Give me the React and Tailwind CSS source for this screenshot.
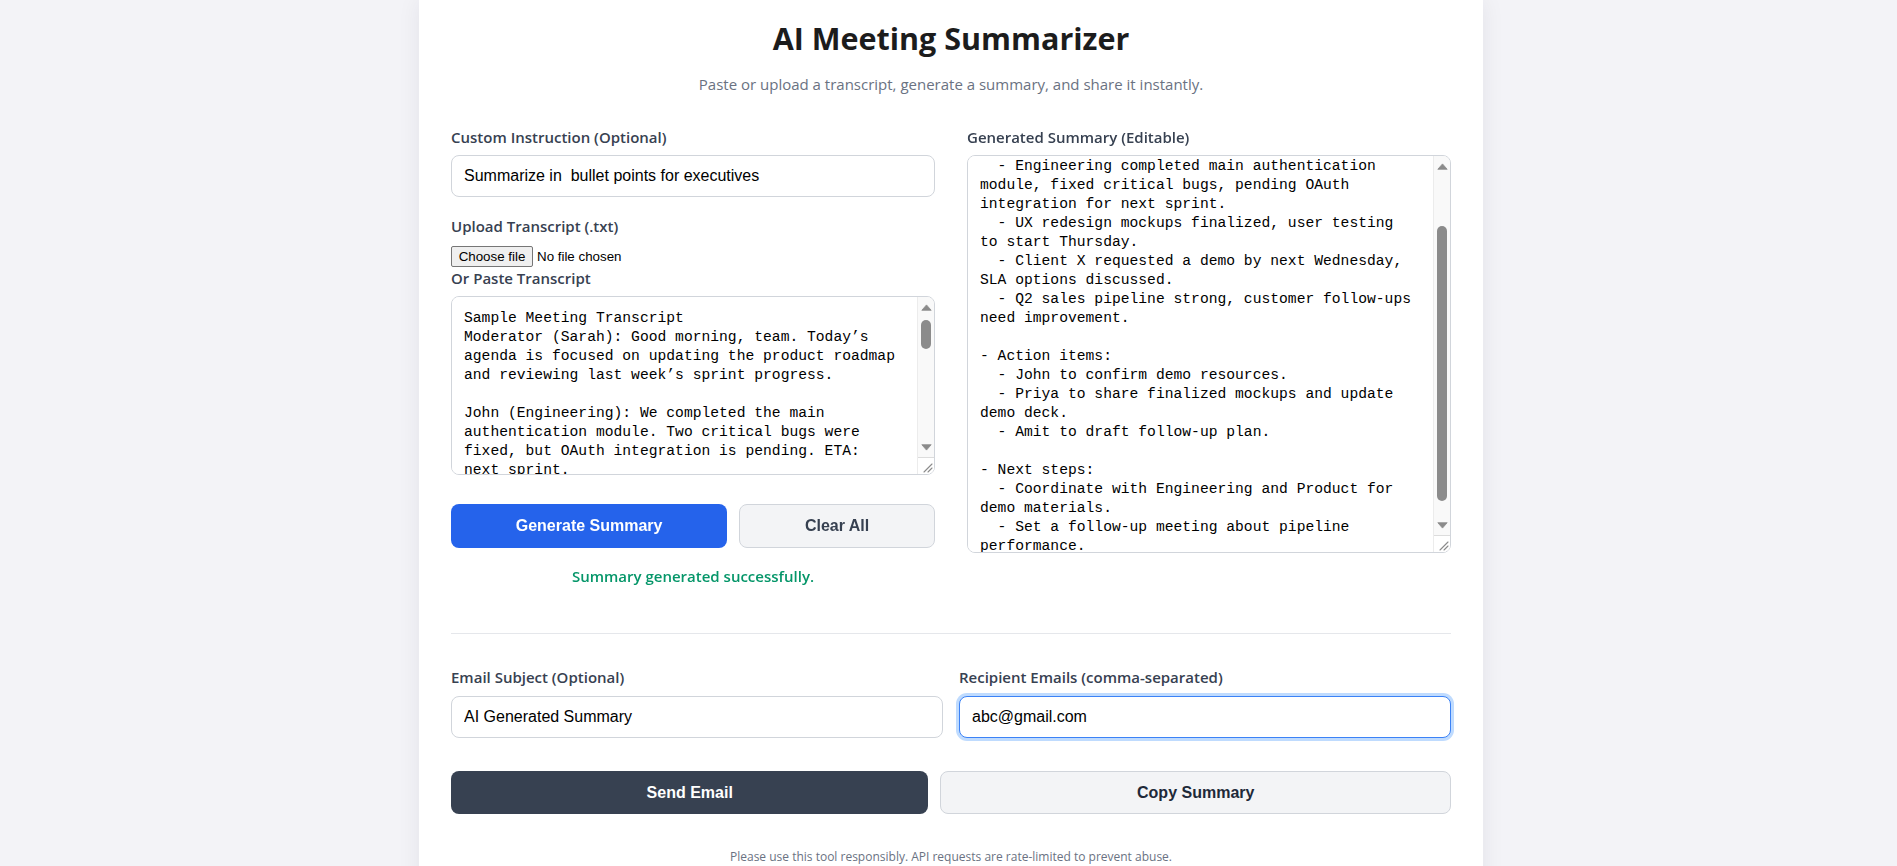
import { useEffect, useRef, useState } from "react";

const transcript = `Sample Meeting Transcript
Moderator (Sarah): Good morning, team. Today’s agenda is focused on updating the product roadmap and reviewing last week’s sprint progress.

John (Engineering): We completed the main authentication module. Two critical bugs were fixed, but OAuth integration is pending. ETA: next sprint.

Priya (Design): The UX redesign mockups are finalized. We plan to start user testing on Thursday with five participants.

Michael (Client Success): Client X has requested a demo of the new dashboard by next Wednesday. They also asked about SLA options.

Amit (Sales): Our Q2 pipeline looks strong, but customer follow-ups need improvement. I’ll draft a follow-up plan.

Moderator (Sarah): Great. John, please confirm demo resources. Priya, share the finalized mockups and update the demo deck. Let’s coordinate with Engineering and Product for demo materials and set a follow-up meeting about pipeline performance.

Meeting adjourned.`;

const initialSummary = `Executive Summary:

- Key updates:
  - Engineering completed main authentication module, fixed critical bugs, pending OAuth integration for next sprint.
  - UX redesign mockups finalized, user testing to start Thursday.
  - Client X requested a demo by next Wednesday, SLA options discussed.
  - Q2 sales pipeline strong, customer follow-ups need improvement.

- Action items:
  - John to confirm demo resources.
  - Priya to share finalized mockups and update demo deck.
  - Amit to draft follow-up plan.

- Next steps:
  - Coordinate with Engineering and Product for demo materials.
  - Set a follow-up meeting about pipeline performance.`;

const label = "block text-[15px] leading-5 font-semibold text-[#374151]";
const field =
  "h-[42px] w-full rounded-lg border bg-white px-3 font-['Liberation_Sans',Arial,sans-serif] text-base text-black outline-none";
const mono =
  "h-full min-w-0 flex-1 resize-none bg-white pt-3 pb-3 pl-3 pr-[17px] font-['Liberation_Mono',monospace] text-[14.66px] leading-[19px] text-black outline-none [scrollbar-width:none]";

function Arrow({ down }) {
  return (
    <svg width="11" height="7" viewBox="0 0 11 7" className={down ? "rotate-180" : ""}>
      <path
        d="M5.5 0.9 L10.2 6.3 H0.8 Z"
        fill="#8b8b8b"
        stroke="#8b8b8b"
        strokeWidth="0.8"
        strokeLinejoin="round"
      />
    </svg>
  );
}

// drawn scrollbar column: arrows, track with thumb, resize grip
function ScrollColumn({ trackClass, thumbClass }) {
  return (
    <div className="flex w-[17px] shrink-0 flex-col border-l border-[#ececec] bg-[#f9f9f9]">
      <div className="flex h-[20px] items-center justify-center">
        <Arrow />
      </div>
      <div className={`flex-1 ${trackClass}`}>
        <div className={`mx-auto w-[10px] rounded-full bg-[#8b8b8b] ${thumbClass}`} />
      </div>
      <div className="flex h-[20px] items-center justify-center">
        <Arrow down />
      </div>
      <div className="flex h-[17px] items-end justify-end border-t border-[#dcdcdc] bg-white">
        <svg width="16" height="16" viewBox="0 0 16 16">
          <path d="M6 14 L14 6 M10 14 L14 10" stroke="#8b8b8b" strokeWidth="1.1" strokeLinecap="round" />
        </svg>
      </div>
    </div>
  );
}

export default function App() {
  const [instruction, setInstruction] = useState("Summarize in  bullet points for executives");
  const [text, setText] = useState(transcript);
  const [summary, setSummary] = useState(initialSummary);
  const [subject, setSubject] = useState("AI Generated Summary");
  const [emails, setEmails] = useState("abc@gmail.com");
  const summaryRef = useRef(null);

  useEffect(() => {
    if (summaryRef.current) summaryRef.current.scrollTop = 68;
  }, []);

  return (
    <div className="min-h-screen bg-[#f3f3f7] font-['Open_Sans',sans-serif]">
      <div className="flex justify-center pl-[5px]">
        <div className="w-[1064px] bg-white px-8 pt-[20px] pb-6 shadow-[0_0_22px_rgba(30,30,60,0.07)]">
          <h1 className="text-center text-[30.5px] leading-9 font-bold text-[#1c1c1c]">
            AI Meeting Summarizer
          </h1>
          <p className="mt-[17px] text-center text-[15px] leading-[22px] text-gray-500">
            Paste or upload a transcript, generate a summary, and share it instantly.
          </p>

          <div className="mt-8 grid grid-cols-2 gap-8">
            <div>
              <label className={`${label} mb-2`}>Custom Instruction (Optional)</label>
              <input
                className={`${field} border-[#d1d5db]`}
                value={instruction}
                onChange={(e) => setInstruction(e.target.value)}
              />

              <label className={`${label} mt-[19px] mb-[10px]`}>Upload Transcript (.txt)</label>
              <label className="flex h-[21px] items-center font-['Liberation_Sans',Arial,sans-serif] text-[13.33px] text-black">
                <input type="file" accept=".txt" className="hidden" />
                <span className="flex h-[21px] w-[82px] items-center justify-center rounded-[2px] border border-[#767676] bg-[#efefef]">
                  Choose file
                </span>
                <span className="ml-1">No file chosen</span>
              </label>

              <label className={`${label} mt-px mb-2`}>Or Paste Transcript</label>
              <div className="flex h-[179px] overflow-hidden rounded-lg border border-[#d1d5db]">
                <textarea className={mono} value={text} onChange={(e) => setText(e.target.value)} />
                <ScrollColumn trackClass="pt-[3px]" thumbClass="h-[29px]" />
              </div>

              <div className="mt-[29px] flex gap-3 font-['Liberation_Sans',Arial,sans-serif]">
                <button className="h-[44px] grow rounded-lg bg-[#2563eb] px-4 text-base font-bold text-white">
                  Generate Summary
                </button>
                <button className="h-[44px] grow rounded-lg border border-[#d1d5db] bg-[#f3f4f6] px-4 text-base font-bold text-[#374151]">
                  Clear All
                </button>
              </div>

              <p className="mt-[18px] text-center text-[15px] leading-5 font-semibold text-[#059669]">
                Summary generated successfully.
              </p>
            </div>

            <div>
              <label className={`${label} mb-2`}>Generated Summary (Editable)</label>
              <div className="flex h-[398px] overflow-hidden rounded-lg border border-[#d1d5db]">
                <textarea
                  ref={summaryRef}
                  className={mono}
                  value={summary}
                  onChange={(e) => setSummary(e.target.value)}
                />
                <ScrollColumn trackClass="pt-[50px]" thumbClass="h-[275px]" />
              </div>
            </div>
          </div>

          <hr className="mt-[47px] border-gray-200" />

          <div className="mt-[33px] grid grid-cols-2 gap-4">
            <div>
              <label className={`${label} mb-[9px]`}>Email Subject (Optional)</label>
              <input
                className={`${field} border-[#d1d5db]`}
                value={subject}
                onChange={(e) => setSubject(e.target.value)}
              />
            </div>
            <div>
              <label className={`${label} mb-[9px]`}>Recipient Emails (comma-separated)</label>
              <input
                autoFocus
                className={`${field} border-[#3b82f6] ring-3 ring-[#bfdbfe]`}
                value={emails}
                onChange={(e) => setEmails(e.target.value)}
              />
            </div>
          </div>

          <div className="mt-[33px] flex gap-3 font-['Liberation_Sans',Arial,sans-serif]">
            <button className="h-[43px] grow rounded-lg bg-[#374151] px-4 text-base font-bold text-white">
              Send Email
            </button>
            <button className="h-[43px] grow rounded-lg border border-[#d1d5db] bg-[#f3f4f6] px-4 text-base font-bold text-gray-800">
              Copy Summary
            </button>
          </div>

          <p className="mt-[34px] text-center text-[12px] leading-[18px] text-gray-500">
            Please use this tool responsibly. API requests are rate-limited to prevent abuse.
          </p>
        </div>
      </div>
    </div>
  );
}
